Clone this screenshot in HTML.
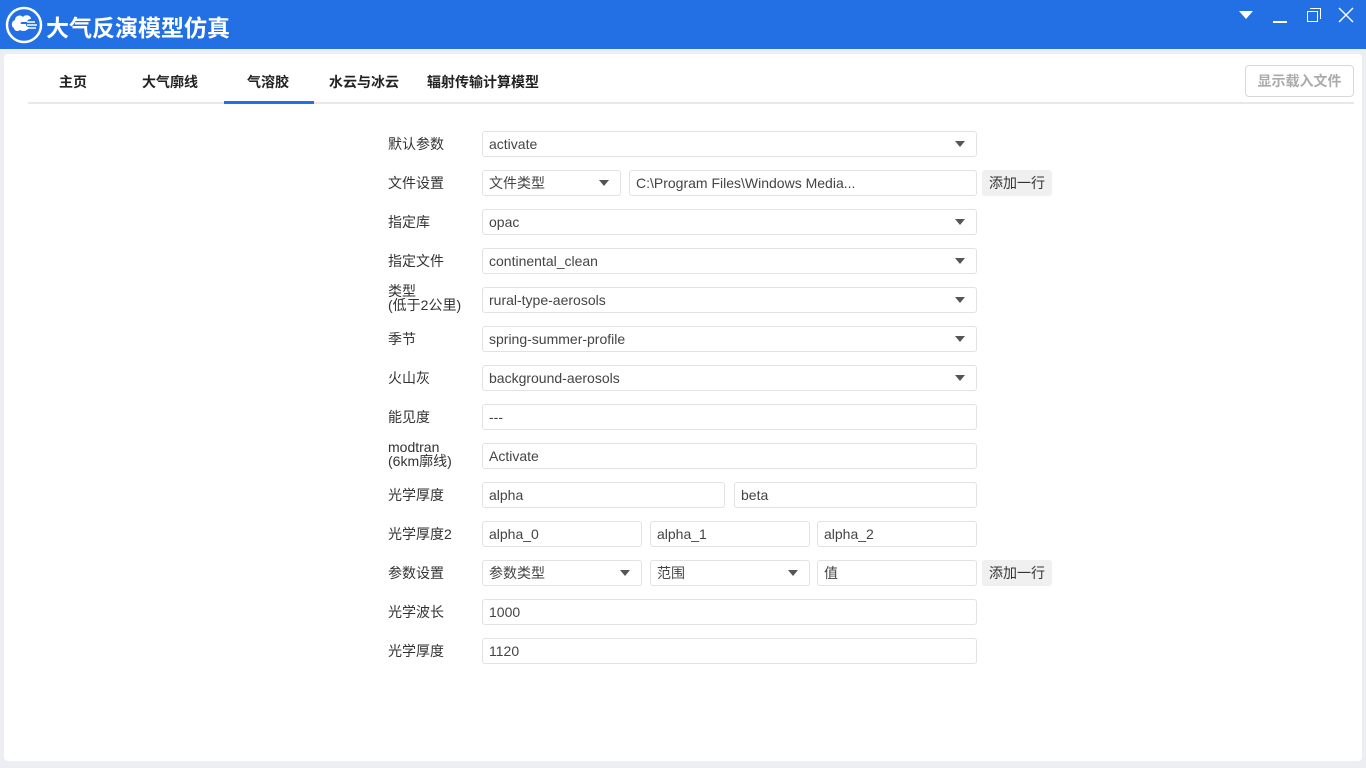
<!DOCTYPE html>
<html><head><meta charset="utf-8"><style>
*{margin:0;padding:0;box-sizing:border-box}
body{width:1366px;height:768px;background:#eceef2;font-family:"Liberation Sans","Noto Sans CJK SC",sans-serif;position:relative;overflow:hidden;color:#333}
.tb{position:absolute;left:0;top:0;width:1366px;height:49px;background:#2270e4}
.title{position:absolute;left:46px;top:9px;color:#fff;font-size:23px;font-weight:bold;letter-spacing:0px}
.card{position:absolute;left:4px;top:54px;width:1358px;height:707px;background:#fff;border-radius:4px}
.tab{position:absolute;top:72px;font-size:14px;color:#222;font-weight:bold}
.ab{position:absolute}
.lbl{position:absolute;left:388px;font-size:14px;color:#333;line-height:14px}
.in{position:absolute;height:26px;border:1px solid #e2e2e2;border-radius:3px;font-size:14px;color:#444;padding-left:6px;line-height:24px;background:#fff}
.in .ar{position:absolute;right:11px;top:9px;width:0;height:0;border-left:5px solid transparent;border-right:5px solid transparent;border-top:6px solid #555}
.btn{position:absolute;left:982px;width:70px;height:26px;background:#f0f0f0;border-radius:3px;font-size:14px;line-height:26px;text-align:center;color:#333}
</style></head><body>
<div class="tb"></div>
<svg class="ab" style="left:5px;top:6px" width="38" height="38" viewBox="0 0 38 38">
<circle cx="19" cy="19" r="17" fill="none" stroke="#fff" stroke-width="2.5"/>
<path d="M9 22c-3-1-3-7 1-8 0-4 5-6 8-3 2-3 8-2 8 2-3 0-4 2-4 3h-5c-2 0-2 2 0 2h4c0 2 1 3 3 3-1 4-6 5-9 3-2 2-6 1-6-2z" fill="#fff"/>
<path d="M22 16h8M22 19h10M23 22h8" stroke="#fff" stroke-width="1.6"/>
</svg>
<div class="title">大气反演模型仿真</div>
<div class="ab" style="left:1239px;top:11px;width:0;height:0;border-left:7px solid transparent;border-right:7px solid transparent;border-top:8px solid #fff"></div>
<div class="ab" style="left:1273px;top:21px;width:14px;height:1.5px;background:#fff"></div>
<div class="ab" style="left:1307px;top:11px;width:11px;height:11px;border:1.3px solid #fff"></div>
<div class="ab" style="left:1310px;top:8px;width:11px;height:11px;border-top:1.3px solid #fff;border-right:1.3px solid #fff"></div>
<svg class="ab" style="left:1338px;top:7px" width="16" height="16"><path d="M1 1L15 15M15 1L1 15" stroke="#fff" stroke-width="1.4"/></svg>
<div class="card"></div>
<div class="tab" style="left:59px">主页</div>
<div class="tab" style="left:142px">大气廓线</div>
<div class="tab" style="left:247px">气溶胶</div>
<div class="tab" style="left:329px">水云与冰云</div>
<div class="tab" style="left:427px">辐射传输计算模型</div>
<div class="ab" style="left:28px;top:102px;width:1326px;height:2px;background:#e8e8e8"></div>
<div class="ab" style="left:224px;top:101px;width:90px;height:3px;background:#2270e4"></div>
<div class="ab" style="left:1245px;top:65px;width:109px;height:32px;border:1px solid #d8d8d8;border-radius:4px;font-size:14px;color:#aaa;text-align:center;line-height:30px;font-weight:bold">显示载入文件</div>

<div class="lbl" style="top:137px">默认参数</div>
<div class="in" style="left:482px;top:131px;width:495px">activate<span class="ar"></span></div>
<div class="lbl" style="top:176px">文件设置</div>
<div class="in" style="left:482px;top:170px;width:139px">文件类型<span class="ar"></span></div>
<div class="in" style="left:629px;top:170px;width:348px">C:\Program Files\Windows Media...</div>
<div class="btn" style="top:170px">添加一行</div>
<div class="lbl" style="top:215px">指定库</div>
<div class="in" style="left:482px;top:209px;width:495px">opac<span class="ar"></span></div>
<div class="lbl" style="top:254px">指定文件</div>
<div class="in" style="left:482px;top:248px;width:495px">continental_clean<span class="ar"></span></div>
<div class="lbl" style="top:284px">类型<br>(低于2公里)</div>
<div class="in" style="left:482px;top:287px;width:495px">rural-type-aerosols<span class="ar"></span></div>
<div class="lbl" style="top:332px">季节</div>
<div class="in" style="left:482px;top:326px;width:495px">spring-summer-profile<span class="ar"></span></div>
<div class="lbl" style="top:371px">火山灰</div>
<div class="in" style="left:482px;top:365px;width:495px">background-aerosols<span class="ar"></span></div>
<div class="lbl" style="top:410px">能见度</div>
<div class="in" style="left:482px;top:404px;width:495px">---</div>
<div class="lbl" style="top:440px">modtran<br>(6km廓线)</div>
<div class="in" style="left:482px;top:443px;width:495px">Activate</div>
<div class="lbl" style="top:488px">光学厚度</div>
<div class="in" style="left:482px;top:482px;width:243px">alpha</div>
<div class="in" style="left:734px;top:482px;width:243px">beta</div>
<div class="lbl" style="top:527px">光学厚度2</div>
<div class="in" style="left:482px;top:521px;width:160px">alpha_0</div>
<div class="in" style="left:650px;top:521px;width:160px">alpha_1</div>
<div class="in" style="left:817px;top:521px;width:160px">alpha_2</div>
<div class="lbl" style="top:566px">参数设置</div>
<div class="in" style="left:482px;top:560px;width:160px">参数类型<span class="ar"></span></div>
<div class="in" style="left:650px;top:560px;width:160px">范围<span class="ar"></span></div>
<div class="in" style="left:817px;top:560px;width:160px">值</div>
<div class="btn" style="top:560px">添加一行</div>
<div class="lbl" style="top:605px">光学波长</div>
<div class="in" style="left:482px;top:599px;width:495px">1000</div>
<div class="lbl" style="top:644px">光学厚度</div>
<div class="in" style="left:482px;top:638px;width:495px">1120</div>
</body></html>
